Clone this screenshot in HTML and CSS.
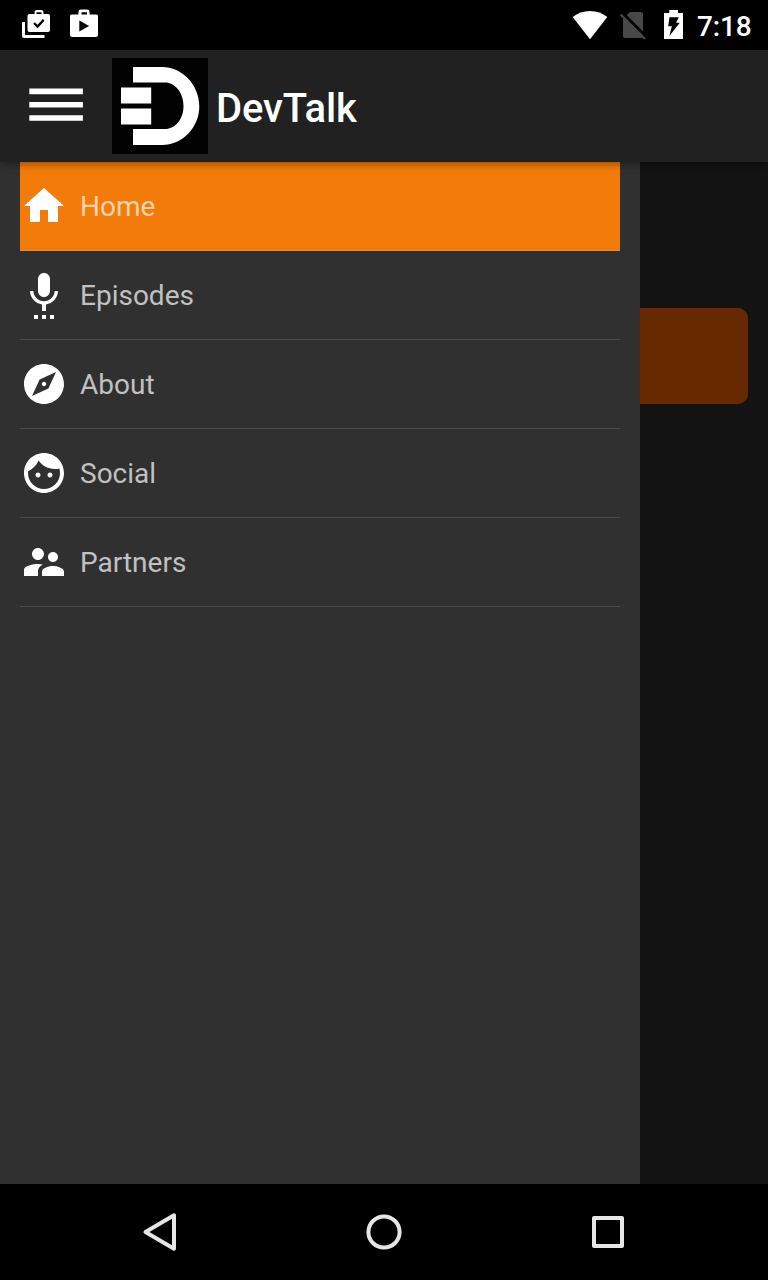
FILE: index.html
```
<!DOCTYPE html>
<html lang="en">
<head>
<meta charset="utf-8">
<title>DevTalk</title>
<link rel="stylesheet" href="styles.css">
</head>
<body>
<div class="screen">
  <header class="status">
    <div class="notifications">
      <svg width="48" height="50" viewBox="12 0 48 50" fill="#fff">
        <path fill-rule="evenodd" d="M29.500 14h5v-1.500q0-2.500 2.500-2.500h4q2.500 0 2.500 2.500V14H48q2 0 2 2v14q0 2-2 2H29.500q-2 0-2-2V16q0-2 2-2zM36.500 14h5v-1.800h-5z"/>
        <path d="M22 22h3v13h19.500v3H24q-2 0-2-2z"/>
        <path d="M34 23l3.500 3.500 6.200-6.600" fill="none" stroke="#000" stroke-width="2.300"/>
      </svg>
      <svg width="48" height="50" viewBox="60 0 48 50">
        <path fill="#fff" fill-rule="evenodd" d="M71.500 14.500h7V12q0-2.500 2.500-2.500h6q2.500 0 2.500 2.500v2.500h7q1.500 0 1.500 1.500v18.500q0 2.500-2.500 2.500h-23Q70 37 70 34.500V16q0-1.500 1.500-1.500zM81.500 14.500h5.500V12.300h-5.500z"/>
        <path d="M79.300 20.400v11l9.800-5.500z"/>
      </svg>
    </div>
    <div class="system">
      <svg width="42" height="50" viewBox="569 0 42 50"><path fill="#fff" d="M590 39.200L572.700 17Q580 11 590 11t17.300 6z"/></svg>
      <svg width="44" height="50" viewBox="611 0 44 50">
        <path fill="#484848" d="M630 12h11q2 0 2 2v22q0 2-2 2h-16q-2 0-2-2V18.500z"/>
        <path d="M622.500 13l23 23" stroke="#000" stroke-width="3"/>
        <path d="M620.600 14.500l24.400 24.500" stroke="#484848" stroke-width="2.200"/>
      </svg>
      <svg width="42" height="50" viewBox="655 0 42 50">
        <path fill="#fff" d="M664 13h5.300v-3h8.700v3h5v26h-19z"/>
        <path d="M669.500 17.300h9.300l-2.800 5.500h3.800L669.300 36l2.600-9.700h-3.700z"/>
      </svg>
      <span class="clock">7:18</span>
    </div>
  </header>
  <div class="toolbar">
    <svg class="burger" width="112" height="112" viewBox="0 50 112 112"><path fill="#fff" d="M29.300 88.500h53.600v5.700H29.300zM29.300 102h53.600v5.600H29.300zM29.300 115.300h53.600v5.500H29.300z"/></svg>
    <svg class="logo" width="96" height="96" viewBox="112 58 96 96">
      <path fill="#020202" d="M112 58h96v96h-96z"/>
      <path fill="#fff" d="M133 67h29c20 0 37.300 17.500 37.300 39.200S182 145 162 145h-29v-16h32c10 0 18.500-9.500 18.500-23s-8.500-23.500-18.500-23.500h-32zM121 87.500h30.200v16H121zM121 108.500h30.200v16H121z"/>
    </svg>
    <h1 class="title">DevTalk</h1>
  </div>
  <main class="content">
    <nav class="drawer">
      <a class="item active"><svg class="icon" viewBox="0 0 24 24"><path d="M10 20v-6h4v6h5v-8h3L12 3 2 12h3v8z"/></svg>Home</a>
      <a class="item"><svg class="icon" viewBox="0 0 24 24"><path d="M7 24h2v-2H7v2zm5-11c1.660 0 2.990-1.340 2.990-3L15 4c0-1.660-1.340-3-3-3S9 2.340 9 4v6c0 1.660 1.340 3 3 3zm-1 11h2v-2h-2v2zm4 0h2v-2h-2v2zm4-14h-1.700c0 3-2.540 5.100-5.300 5.100S6.700 13 6.700 10H5c0 3.410 2.720 6.230 6 6.720V20h2v-3.280c3.280-.49 6-3.310 6-6.720z"/></svg>Episodes</a>
      <a class="item"><svg class="icon" viewBox="0 0 24 24"><path d="M12 10.900c-.61 0-1.100.49-1.100 1.100s.49 1.100 1.100 1.100c.61 0 1.100-.49 1.100-1.100s-.49-1.100-1.100-1.100zM12 2C6.480 2 2 6.480 2 12s4.480 10 10 10 10-4.480 10-10S17.520 2 12 2zm2.190 12.190L6 18l3.810-8.190L18 6l-3.810 8.190z"/></svg>About</a>
      <a class="item"><svg class="icon" viewBox="0 0 24 24"><path d="M9 11.750c-.69 0-1.250.56-1.250 1.250s.56 1.250 1.250 1.250 1.250-.56 1.250-1.250-.56-1.250-1.250-1.250zm6 0c-.69 0-1.250.56-1.250 1.250s.56 1.250 1.250 1.250 1.250-.56 1.250-1.250-.56-1.250-1.250-1.250zM12 2C6.480 2 2 6.480 2 12s4.480 10 10 10 10-4.480 10-10S17.520 2 12 2zm0 18c-4.410 0-8-3.590-8-8 0-.29.02-.58.05-.86 2.360-1.050 4.230-2.980 5.210-5.370C11.070 8.330 14.050 10 17.420 10c.78 0 1.530-.09 2.250-.26.21.71.33 1.470.33 2.260 0 4.410-3.590 8-8 8z"/></svg>Social</a>
      <a class="item"><svg class="icon" viewBox="0 0 24 24"><path d="M16.500 12c1.380 0 2.490-1.120 2.490-2.500S17.880 7 16.500 7C15.120 7 14 8.120 14 9.500s1.120 2.500 2.500 2.500zM9 11c1.660 0 2.990-1.340 2.990-3S10.660 5 9 5C7.340 5 6 6.340 6 8s1.340 3 3 3zm7.500 3c-1.830 0-5.500.92-5.500 2.750V19h11v-2.250c0-1.830-3.670-2.750-5.500-2.750zM9 13c-2.330 0-7 .92-7 2.750V19h7v-2.250c0-.85.33-2.340 2.370-3.470C10.500 13.100 9.660 13 9 13z"/></svg>Partners</a>
    </nav>
    <div class="page"><div class="button"></div></div>
  </main>
  <footer class="navbar">
    <svg width="224" height="96" viewBox="48 1184 224 96"><path d="M174 1215.300v33.400L145.500 1232z"/></svg>
    <svg width="224" height="96" viewBox="272 1184 224 96"><circle cx="384" cy="1232" r="15.600"/></svg>
    <svg width="224" height="96" viewBox="496 1184 224 96"><path d="M594 1218h28v28h-28z"/></svg>
  </footer>
</div>
</body>
</html>
```
FILE: styles.css
```
body {
  margin: 0;
  background: #000;
  font-family: Roboto, sans-serif;
}

svg {
  display: block;
  flex: none;
}

.screen {
  width: 768px;
  height: 1280px;
  display: flex;
  flex-direction: column;
  overflow: hidden;
}

.status {
  height: 50px;
  display: flex;
  justify-content: space-between;
  padding: 0 16px 0 12px;
  background: #000;
}

.notifications,
.system {
  display: flex;
}

.clock {
  width: 55px;
  font-size: 28px;
  font-weight: 500;
  line-height: 54px;
  letter-spacing: -0.15px;
  color: #fff;
  white-space: nowrap;
}

.toolbar {
  position: relative;
  z-index: 1;
  height: 112px;
  display: flex;
  align-items: center;
  background: #212121;
  box-shadow: 0 2px 8px rgba(0, 0, 0, 0.4);
}

.title {
  margin: 6px 0 0 8px;
  font-size: 40px;
  font-weight: 500;
  line-height: 48px;
  letter-spacing: -0.1px;
  color: #fff;
}

.content {
  flex: 1;
  display: flex;
}

.drawer {
  box-sizing: border-box;
  width: 640px;
  padding: 0 20px;
  background: #303030;
}

.item {
  display: flex;
  align-items: center;
  gap: 12px;
  height: 88px;
  border-bottom: 1px solid #4a4a4a;
  font-size: 28px;
  color: #c1c1c1;
}

.item.active {
  background: #f37b0a;
  border-bottom-color: #f48a24;
  color: #fbd3ac;
}

.icon {
  width: 48px;
  height: 48px;
  fill: #fff;
}

.page {
  flex: 1;
  padding: 146px 20px 0 0;
  background: #131313;
}

.button {
  height: 96px;
  border-radius: 0 10px 10px 0;
  background: #662900;
}

.navbar {
  height: 96px;
  display: flex;
  justify-content: center;
  background: #000;
  fill: none;
  stroke: #e6e6e6;
  stroke-width: 4;
  stroke-linejoin: round;
}
```
